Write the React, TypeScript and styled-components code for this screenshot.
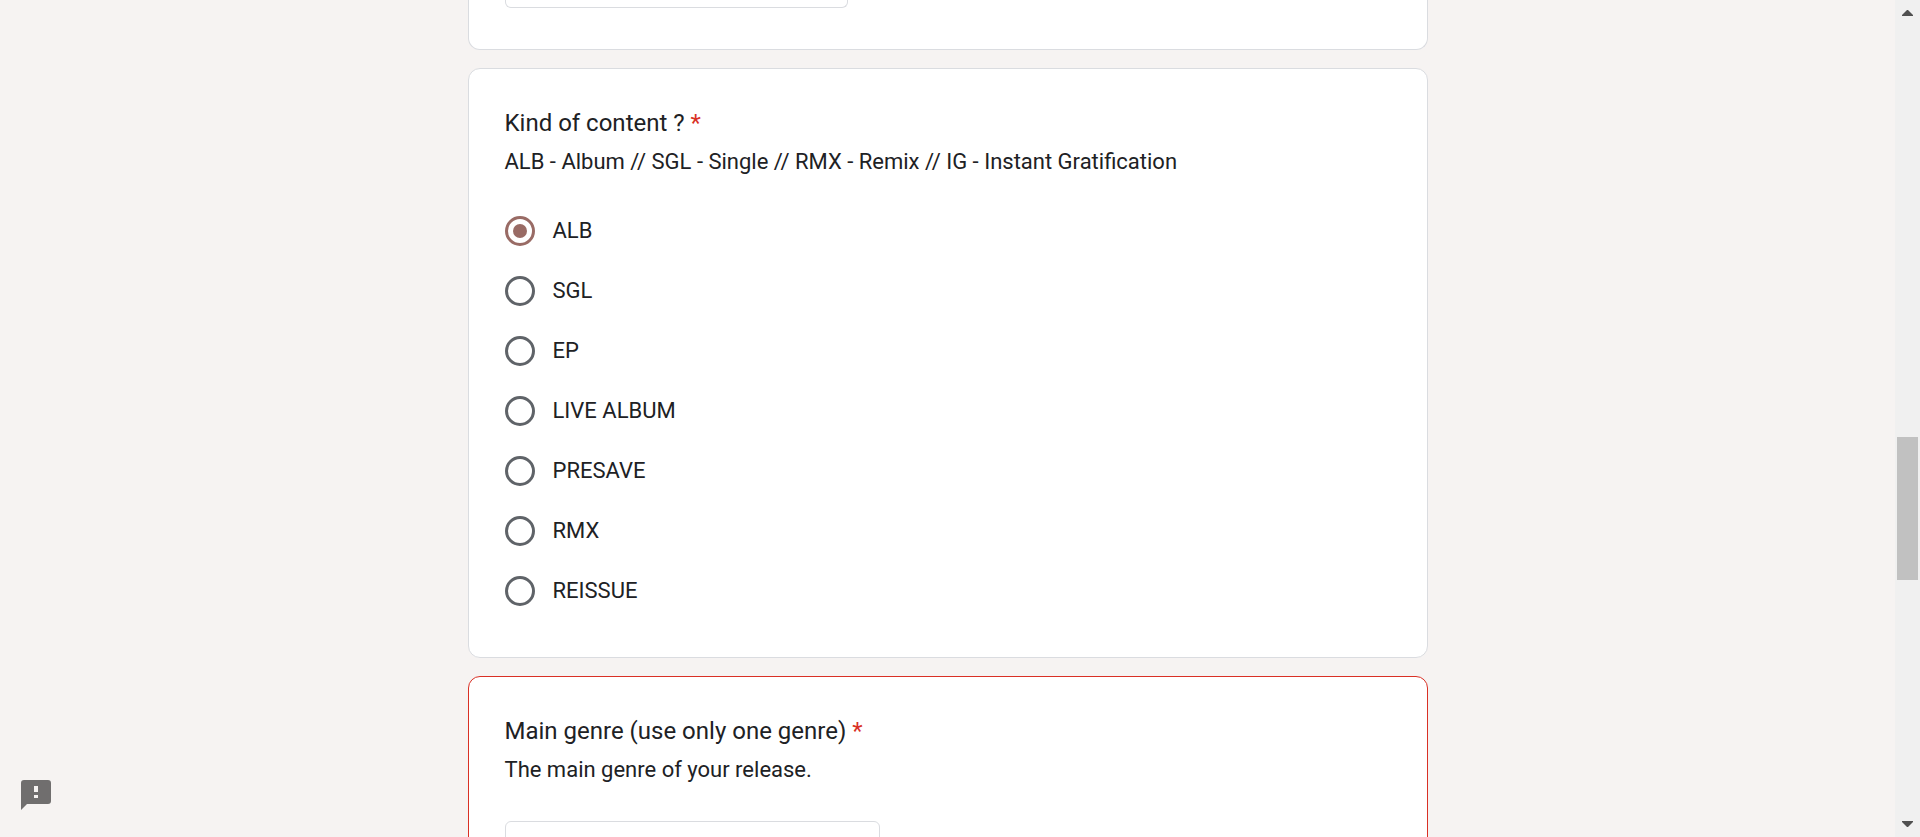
import React, { useState } from "react";
import styled, { createGlobalStyle } from "styled-components";

const GlobalStyle = createGlobalStyle`
  *, *::before, *::after { box-sizing: border-box; }
  body {
    margin: 0;
    background: #f6f3f2;
    color: #202124;
    font-family: Roboto, "Liberation Sans", sans-serif;
  }
`;

const Page = styled.div`
  display: flex;
  height: 100vh;
  overflow: hidden;
`;

const Form = styled.form`
  flex: 1;
  display: flex;
  flex-direction: column;
  align-items: center;
  gap: 18px;
  overflow: hidden;
`;

const Card = styled.section<{ $invalid?: boolean; $continued?: boolean }>`
  flex: none;
  width: 100%;
  max-width: 960px;
  padding: ${(p) => (p.$continued ? "0 36px 41px" : "36px")};
  background: #fff;
  border: 1px solid ${(p) => (p.$invalid ? "#d93025" : "#dadce0")};
  border-radius: 12px;
  ${(p) =>
    p.$continued &&
    `
    border-top: 0;
    border-top-left-radius: 0;
    border-top-right-radius: 0;
  `}
`;

const Group = styled.fieldset`
  margin: 0;
  padding: 0;
  border: 0;
`;

const Question = styled.div`
  font-size: 24px;
  line-height: 36px;
`;

const Legend = styled.legend`
  padding: 0;
  font-size: 24px;
  line-height: 36px;
`;

const Required = styled.span`
  color: #d93025;
`;

const Description = styled.p`
  margin: 6px 0 0;
  font-size: 22px;
  line-height: 30px;
`;

const Options = styled.div`
  margin-top: 24px;
`;

const Option = styled.label`
  display: flex;
  align-items: center;
  gap: 18px;
  width: fit-content;
  height: 60px;
  font-size: 22px;
  line-height: 30px;
  cursor: pointer;
`;

const Radio = styled.input`
  appearance: none;
  display: grid;
  place-items: center;
  width: 30px;
  height: 30px;
  margin: 0;
  border: 3px solid #5f6368;
  border-radius: 50%;
  cursor: pointer;

  &:checked {
    border-color: #996b65;
  }

  &:checked::before {
    content: "";
    width: 14px;
    height: 14px;
    border-radius: 50%;
    background: #996b65;
  }
`;

const Dropdown = styled.select<{ $continued?: boolean }>`
  appearance: none;
  display: block;
  width: ${(p) => (p.$continued ? "343px" : "375px")};
  height: ${(p) => (p.$continued ? "8px" : "72px")};
  margin-top: ${(p) => (p.$continued ? "0" : "36px")};
  padding: 0 24px;
  background: #fff;
  border: 1px solid #dadce0;
  border-radius: 6px;
  ${(p) =>
    p.$continued &&
    `
    border-top: 0;
    border-top-left-radius: 0;
    border-top-right-radius: 0;
  `}
`;

const FeedbackButton = styled.button`
  position: fixed;
  left: 21px;
  bottom: 27px;
  width: 30px;
  height: 30px;
  padding: 0;
  border: 0;
  background: none;
  cursor: pointer;

  svg { display: block; }
`;

const ScrollBar = styled.div`
  flex: none;
  display: flex;
  flex-direction: column;
  width: 25px;
  background: #f0f0f0;
`;

const ScrollButton = styled.button`
  display: grid;
  place-items: center;
  height: 26px;
  padding: 0;
  border: 0;
  background: none;
`;

const Track = styled.div`
  flex: 1;
  display: flex;
  flex-direction: column;
  padding: 0 2px;
`;

const TrackPart = styled.div<{ $share: number; $thumb?: boolean }>`
  flex: ${(p) => p.$share} 0 0;
  background: ${(p) => (p.$thumb ? "#c1c1c1" : "transparent")};
`;

const kinds = ["ALB", "SGL", "EP", "LIVE ALBUM", "PRESAVE", "RMX", "REISSUE"];

export default function App() {
  const [kind, setKind] = useState("ALB");

  return (
    <>
      <GlobalStyle />
      <Page>
        <Form>
          <Card $continued>
            <Dropdown $continued aria-label="Previous question" />
          </Card>

          <Card>
            <Group>
              <Legend>
                Kind of content ? <Required>*</Required>
              </Legend>
              <Description>
                ALB - Album // SGL - Single // RMX - Remix // IG - Instant Gratification
              </Description>
              <Options>
                {kinds.map((k) => (
                  <Option key={k}>
                    <Radio
                      type="radio"
                      name="kind"
                      value={k}
                      checked={kind === k}
                      onChange={() => setKind(k)}
                    />
                    {k}
                  </Option>
                ))}
              </Options>
            </Group>
          </Card>

          <Card $invalid>
            <Question>
              <label htmlFor="genre">
                Main genre (use only one genre) <Required>*</Required>
              </label>
            </Question>
            <Description id="genre-help">The main genre of your release.</Description>
            <Dropdown id="genre" aria-describedby="genre-help" aria-invalid required />
          </Card>
        </Form>

        <ScrollBar>
          <ScrollButton type="button" aria-label="Scroll up">
            <svg width="11" height="6" viewBox="0 0 11 6" fill="#505050">
              <path d="M5 0h1l5 5v1H0V5z" />
            </svg>
          </ScrollButton>
          <Track>
            <TrackPart $share={411} />
            <TrackPart $share={143} $thumb />
            <TrackPart $share={231} />
          </Track>
          <ScrollButton type="button" aria-label="Scroll down">
            <svg width="11" height="6" viewBox="0 0 11 6" fill="#505050">
              <path d="M0 0h11v1L6 6H5L0 1z" />
            </svg>
          </ScrollButton>
        </ScrollBar>
      </Page>

      <FeedbackButton type="button" aria-label="Report a problem">
        <svg width="30" height="30" viewBox="0 0 30 30" fill="#706e6e">
          <path
            fillRule="evenodd"
            d="M3 0h24a3 3 0 0 1 3 3v18a3 3 0 0 1-3 3H6l-6 6V3a3 3 0 0 1 3-3zM13 6v6h4V6zM13 15v3h4v-3z"
          />
        </svg>
      </FeedbackButton>
    </>
  );
}
